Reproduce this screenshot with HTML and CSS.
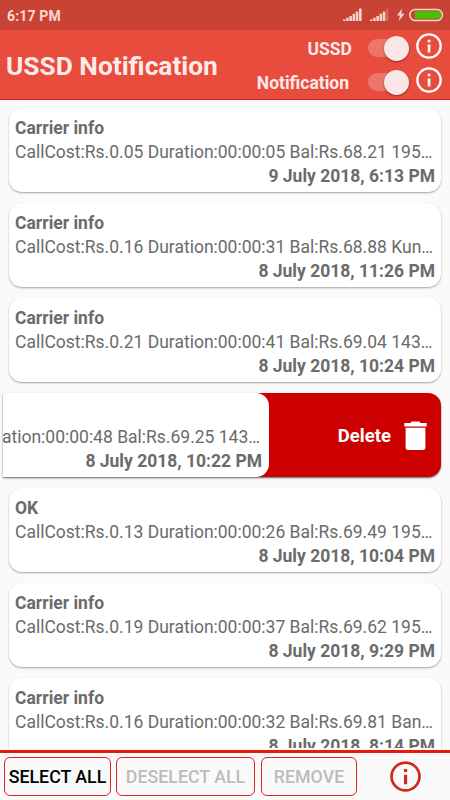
FILE: index.html
```
<!DOCTYPE html>
<html lang="en">
<head>
<meta charset="utf-8">
<title>USSD Notification</title>
<link rel="stylesheet" href="styles.css">
</head>
<body>
<svg class="defs" width="0" height="0" aria-hidden="true">
  <symbol id="info" viewBox="0 0 26 26">
    <circle cx="13" cy="13" r="11.7" fill="none" stroke="currentColor" stroke-width="2.3"/>
    <path d="M11.7 6.8h2.7v2.4h-2.7zM11.7 11.6h2.7v7.8h-2.7z" fill="currentColor"/>
  </symbol>
</svg>
<div class="status">
  <span class="clock">6:17 PM</span>
  <svg class="indicators" width="101" height="14" viewBox="0 0 101 14">
    <g fill="#f6d5d1">
      <path d="M0 11.5h2.5V13H0zM3.2 9.8h2.5V13H3.2zM6.4 8h2.5v5H6.4zM9.6 5.8h2.5V13H9.6zM12.8 3.4h2.5V13h-2.5zM16 .5h2.6V13H16z"/>
      <path d="M27 11.5h2.5V13H27zM30.2 9.8h2.5V13h-2.5zM33.4 8h2.5v5h-2.5zM36.6 5.8h2.5V13h-2.5zM39.8 3.4h2.5V13h-2.5z"/>
      <path d="M43 .5h2.3V13H43z" opacity=".28"/>
      <path d="M59.2 .6L54 7.6h3L55.8 13l5.7-7.2h-3.2z"/>
    </g>
    <rect x="66.8" y="1.4" width="32.6" height="11.2" rx="5.6" fill="none" stroke="#f6d5d1" stroke-width="1.5"/>
    <path d="M72 3.2H94.5a3.8 3.8 0 0 1 0 7.6H72z" fill="#43c200"/>
  </svg>
</div>
<header class="bar">
  <h1>USSD Notification</h1>
  <div class="options">
    <div class="option">
      <span class="label ussd">USSD</span>
      <span class="switch"><i class="track"></i><i class="thumb"></i></span>
      <svg class="info"><use href="#info"/></svg>
    </div>
    <div class="option">
      <span class="label">Notification</span>
      <span class="switch"><i class="track"></i><i class="thumb"></i></span>
      <svg class="info"><use href="#info"/></svg>
    </div>
  </div>
</header>
<main class="list">
  <article class="card"><h2>Carrier info</h2><p>CallCost:Rs.0.05 Duration:00:00:05 Bal:Rs.68.21 195…</p><time>9 July 2018, 6:13 PM</time></article>
  <article class="card"><h2>Carrier info</h2><p>CallCost:Rs.0.16 Duration:00:00:31 Bal:Rs.68.88 Kun…</p><time>8 July 2018, 11:26 PM</time></article>
  <article class="card"><h2>Carrier info</h2><p>CallCost:Rs.0.21 Duration:00:00:41 Bal:Rs.69.04 143…</p><time>8 July 2018, 10:24 PM</time></article>
  <div class="swipe">
    <div class="delete">
      <span>Delete</span>
      <svg width="23" height="29" viewBox="0 0 23 29"><path d="M.3 2.1h6.2L7.7.6h7.6l1.2 1.5h6.2v3.3H.3zM1.6 6.8h19.8v19.4a2.8 2.8 0 0 1-2.8 2.8H4.4a2.8 2.8 0 0 1-2.8-2.8z" fill="#fff"/></svg>
    </div>
    <article class="card swiped"><p>ation:00:00:48 Bal:Rs.69.25 143…</p><time>8 July 2018, 10:22 PM</time></article>
  </div>
  <article class="card"><h2>OK</h2><p>CallCost:Rs.0.13 Duration:00:00:26 Bal:Rs.69.49 195…</p><time>8 July 2018, 10:04 PM</time></article>
  <article class="card"><h2>Carrier info</h2><p>CallCost:Rs.0.19 Duration:00:00:37 Bal:Rs.69.62 195…</p><time>8 July 2018, 9:29 PM</time></article>
  <article class="card"><h2>Carrier info</h2><p>CallCost:Rs.0.16 Duration:00:00:32 Bal:Rs.69.81 Ban…</p><time>8 July 2018, 8:14 PM</time></article>
</main>
<footer class="actions">
  <button class="select">SELECT ALL</button>
  <button class="deselect" disabled>DESELECT ALL</button>
  <button class="remove" disabled>REMOVE</button>
  <svg class="about"><use href="#info"/></svg>
</footer>
</body>
</html>
```
FILE: styles.css
```
* { box-sizing: border-box; }
body {
  margin: 0;
  width: 450px;
  height: 800px;
  overflow: hidden;
  display: flex;
  flex-direction: column;
  background: #fafafa;
  font-family: Roboto, sans-serif;
  color: #6b6b6b;
}
.defs { position: absolute; }
.status {
  height: 30px;
  flex: none;
  display: flex;
  align-items: center;
  justify-content: space-between;
  padding: 0 7px;
  background: #c94334;
  color: #fad9d5;
}
.clock { font-size: 14px; font-weight: 700; line-height: 30px; letter-spacing: .15px; padding-top: 1px; }
.indicators { margin-right: -1px; }
.bar {
  height: 70px;
  flex: none;
  display: flex;
  justify-content: space-between;
  background: #e84c3d;
  border-bottom: 1px solid #d32114;
  color: #ffeaea;
  padding: 0 8px 0 6px;
}
h1 { margin: 0; font-size: 26.3px; font-weight: 700; line-height: 72px; white-space: nowrap; }
.options { display: flex; flex-direction: column; }
.option { height: 34px; display: flex; align-items: center; justify-content: flex-end; }
.label { font-size: 17.5px; font-weight: 700; line-height: 34px; padding-top: 3px; margin-right: 19px; }
.ussd { margin-right: 16px; }
.switch { width: 42px; height: 26px; display: flex; align-items: center; margin-right: 6px; margin-top: 2px; }
.track { width: 30px; height: 18px; border-radius: 9px; background: #ec766c; }
.thumb { width: 25px; height: 25px; flex: none; margin-left: -14px; border-radius: 50%; background: #f9e7e7; box-shadow: 0 1px 2px rgba(80, 0, 0, .5); }
.info { width: 26px; height: 26px; color: #fff; margin-top: -2px; }
.list {
  height: 648px;
  flex: none;
  overflow: hidden;
  padding: 8px 9px 0;
  display: flex;
  flex-direction: column;
  gap: 11px;
}
.card {
  height: 84px;
  flex: none;
  padding: 9px 6px 0;
  border-radius: 13px;
  background: #fff;
  box-shadow: 0 1px 2px rgba(0, 0, 0, .35);
  display: flex;
  flex-direction: column;
}
.card h2, .card p, .card time { margin: 0; font-size: 17.5px; line-height: 22px; height: 24px; white-space: nowrap; }
.card h2, .card time { font-weight: 700; }
.card p { font-weight: 400; }
.card time { line-height: 22px; align-self: flex-end; }
.swipe { height: 84px; flex: none; display: grid; margin-left: -6px; }
.delete, .swiped { grid-area: 1 / 1; }
.delete {
  border-radius: 0 13px 13px 0;
  background: #c00;
  box-shadow: 0 1px 2px rgba(0, 0, 0, .6);
  display: flex;
  justify-content: flex-end;
  align-items: center;
  padding: 1px 14px 0 0;
  gap: 13px;
  color: #fff;
  font-size: 18.5px;
  font-weight: 700;
}
.swiped { width: 266px; border-radius: 0 13px 13px 0; padding: 33px 7px 0 0; box-shadow: none; overflow: hidden; }
.swiped p { align-self: flex-end; margin-right: 2px; }
.actions {
  flex: 1;
  display: flex;
  align-items: flex-start;
  margin-top: 2px;
  border-top: 3px solid #e31d05;
  padding: 4px 0 0 4px;
}
.actions button {
  height: 39px;
  padding: 0;
  border: 1px solid #e0241b;
  border-radius: 6px;
  background: transparent;
  font: 500 17.8px/38px Roboto, sans-serif;
  color: #000;
  white-space: nowrap;
}
.actions button:disabled { color: #bcbcbc; }
.select { width: 107px; margin-right: 5px; }
.deselect { width: 139px; margin-right: 6px; }
.remove { width: 96px; margin-right: 33px; }
.about { width: 31px; height: 31px; margin-top: 4px; color: #cf2a1c; }
```
